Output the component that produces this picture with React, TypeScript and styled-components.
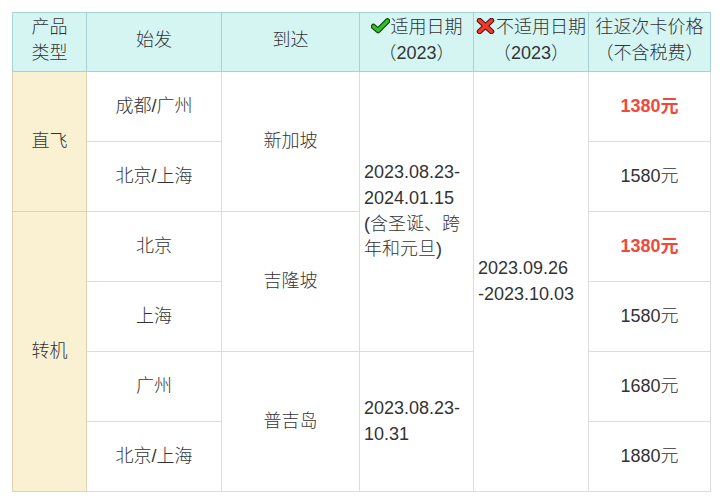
import React from 'react';
import styled, { createGlobalStyle } from 'styled-components';

const GlobalStyle = createGlobalStyle`
  body {
    margin: 0;
    background: #fff;
    font-family: "Liberation Sans", Arial, "Noto Sans CJK SC", sans-serif;
    color: #333;
  }
`;

const Page = styled.div`
  padding: 12px;
`;

const Table = styled.table`
  width: 698px;
  table-layout: fixed;
  border-collapse: collapse;
  font-size: 18px;
  font-weight: 300;
  line-height: 25.7px;
`;

const HeadRow = styled.tr`
  height: 59px;
`;

const BodyRow = styled.tr`
  height: 70px;
`;

const HeadCell = styled.th`
  background: #d5f5f3;
  border: 1px solid #a9d3d2;
  font-weight: 300;
  padding: 1px 2px 3px;
  text-align: center;
  vertical-align: middle;
  white-space: nowrap;
`;

const TypeCell = styled.td`
  background: #faf0d2;
  border: 1px solid #ddd4b4;
  text-align: center;
  vertical-align: middle;
`;

const Cell = styled.td<{ $left?: boolean }>`
  border: 1px solid #dcdcdc;
  padding: 0 4px;
  text-align: ${({ $left }) => ($left ? 'left' : 'center')};
  vertical-align: middle;
`;

const Price = styled.span<{ $hot?: boolean }>`
  color: ${({ $hot }) => ($hot ? '#f2483b' : '#333')};
  font-weight: ${({ $hot }) => ($hot ? 'bold' : '300')};
`;

const IconWrap = styled.span`
  display: inline-block;
  line-height: 0;
  vertical-align: -1px;
  margin-right: 1px;
`;

const CheckIcon = () => (
  <IconWrap>
    <svg width="19" height="16" viewBox="0 0 19 16">
      <path d="M2.5 8.5 L7 12.5 L16.5 3" fill="none" stroke="#1d3a12" strokeWidth="5.5" strokeLinecap="round" strokeLinejoin="round" />
      <path d="M2.5 8.5 L7 12.5 L16.5 3" fill="none" stroke="#2fc025" strokeWidth="3.2" strokeLinecap="round" strokeLinejoin="round" />
    </svg>
  </IconWrap>
);

const CrossIcon = () => (
  <IconWrap>
    <svg width="19" height="16" viewBox="0 0 19 16">
      <path d="M3.5 2.5 L15.5 13.5 M15.5 2.5 L3.5 13.5" fill="none" stroke="#4a1410" strokeWidth="5.5" strokeLinecap="round" />
      <path d="M3.5 2.5 L15.5 13.5 M15.5 2.5 L3.5 13.5" fill="none" stroke="#f23a2b" strokeWidth="3.4" strokeLinecap="round" />
    </svg>
  </IconWrap>
);

const App: React.FC = () => {
  return (
    <Page>
      <GlobalStyle />
      <Table>
        <colgroup>
          <col style={{ width: 74 }} />
          <col style={{ width: 135 }} />
          <col style={{ width: 138 }} />
          <col style={{ width: 114 }} />
          <col style={{ width: 115 }} />
          <col style={{ width: 122 }} />
        </colgroup>
        <thead>
          <HeadRow>
            <HeadCell>产品<br />类型</HeadCell>
            <HeadCell>始发</HeadCell>
            <HeadCell>到达</HeadCell>
            <HeadCell>
              <CheckIcon />适用日期<br />（2023）
            </HeadCell>
            <HeadCell>
              <CrossIcon />不适用日期<br />（2023）
            </HeadCell>
            <HeadCell>往返次卡价格<br />（不含税费）</HeadCell>
          </HeadRow>
        </thead>
        <tbody>
          <BodyRow>
            <TypeCell rowSpan={2}>直飞</TypeCell>
            <Cell>成都/广州</Cell>
            <Cell rowSpan={2}>新加坡</Cell>
            <Cell $left rowSpan={4}>
              2023.08.23-<br />2024.01.15<br />(含圣诞、跨<br />年和元旦)
            </Cell>
            <Cell $left rowSpan={6}>
              2023.09.26<br />-2023.10.03
            </Cell>
            <Cell><Price $hot>1380元</Price></Cell>
          </BodyRow>
          <BodyRow>
            <Cell>北京/上海</Cell>
            <Cell><Price>1580元</Price></Cell>
          </BodyRow>
          <BodyRow>
            <TypeCell rowSpan={4}>转机</TypeCell>
            <Cell>北京</Cell>
            <Cell rowSpan={2}>吉隆坡</Cell>
            <Cell><Price $hot>1380元</Price></Cell>
          </BodyRow>
          <BodyRow>
            <Cell>上海</Cell>
            <Cell><Price>1580元</Price></Cell>
          </BodyRow>
          <BodyRow>
            <Cell>广州</Cell>
            <Cell rowSpan={2}>普吉岛</Cell>
            <Cell $left rowSpan={2}>
              2023.08.23-<br />10.31
            </Cell>
            <Cell><Price>1680元</Price></Cell>
          </BodyRow>
          <BodyRow>
            <Cell>北京/上海</Cell>
            <Cell><Price>1880元</Price></Cell>
          </BodyRow>
        </tbody>
      </Table>
    </Page>
  );
};

export default App;
